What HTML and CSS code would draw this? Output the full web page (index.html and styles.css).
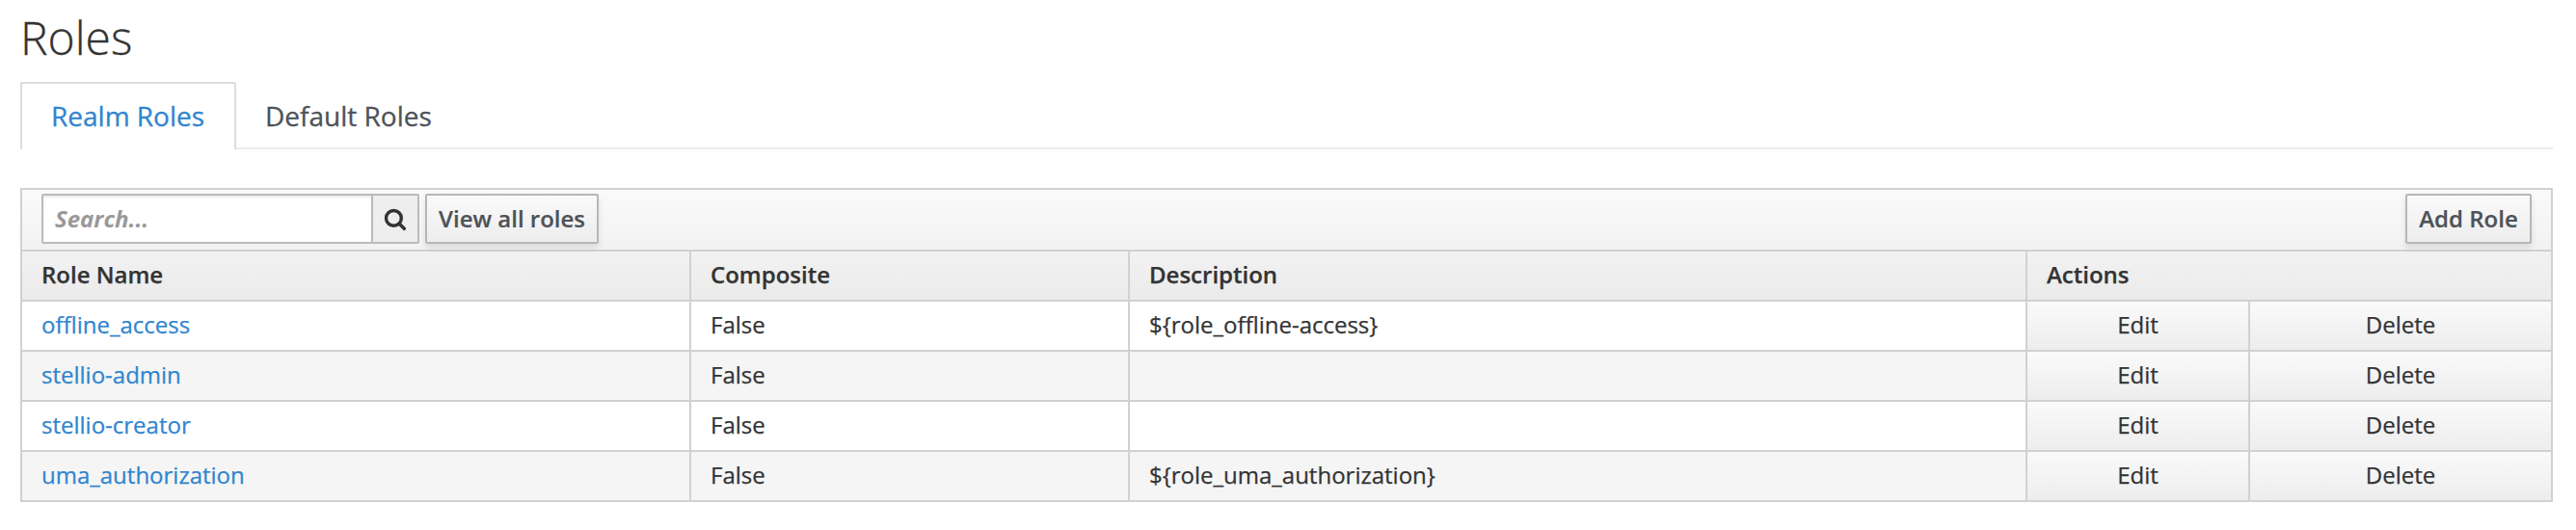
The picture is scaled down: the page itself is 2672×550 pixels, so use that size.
FILE: index.html
```html
<!DOCTYPE html>
<html lang="en">
<head>
<meta charset="utf-8">
<title>Roles</title>
<link rel="stylesheet" href="styles.css">
</head>
<body>
<main class="page">
  <h1 class="title">Roles</h1>
  <ul class="tabs">
    <li class="tab tab-active"><a href="#">Realm Roles</a></li>
    <li class="tab"><a href="#">Default Roles</a></li>
  </ul>
  <div class="panel">
    <div class="toolbar">
      <div class="search">
        <input class="search-input" type="text" placeholder="Search..." aria-label="Search">
        <button class="search-button" type="button" aria-label="Search">
          <svg class="search-icon" viewBox="0 0 24 24"><circle cx="10.4" cy="10.4" r="7.9" fill="none" stroke="#333" stroke-width="3.4"/><path d="M16 16l5.3 5.3" stroke="#333" stroke-width="3.6" stroke-linecap="round"/></svg>
        </button>
      </div>
      <button class="button button-view" type="button">View all roles</button>
      <button class="button button-add" type="button">Add Role</button>
    </div>
    <table class="roles">
      <colgroup><col class="col-name"><col class="col-composite"><col class="col-description"><col class="col-edit"><col class="col-delete"></colgroup>
      <thead>
        <tr><th>Role Name</th><th>Composite</th><th>Description</th><th colspan="2">Actions</th></tr>
      </thead>
      <tbody>
        <tr><td><a href="#">offline_access</a></td><td>False</td><td>${role_offline-access}</td><td class="action">Edit</td><td class="action">Delete</td></tr>
        <tr><td><a href="#">stellio-admin</a></td><td>False</td><td></td><td class="action">Edit</td><td class="action">Delete</td></tr>
        <tr><td><a href="#">stellio-creator</a></td><td>False</td><td></td><td class="action">Edit</td><td class="action">Delete</td></tr>
        <tr><td><a href="#">uma_authorization</a></td><td>False</td><td>${role_uma_authorization}</td><td class="action">Edit</td><td class="action">Delete</td></tr>
      </tbody>
    </table>
  </div>
</main>
</body>
</html>
```

FILE: styles.css
```css
* { box-sizing: border-box; }
body {
  margin: 0;
  background: #fff;
  color: #333;
  font: 24px/40px "Open Sans", "Noto Sans", sans-serif;
}
a { color: #3085ce; text-decoration: none; }
.page { width: 2648px; padding: 12px 0 0 21px; }
.title { margin: 0 0 20px; font-size: 48px; font-weight: 300; line-height: 53px; -webkit-text-stroke: .3px; }
.tabs {
  display: flex;
  height: 70px;
  margin: 0 0 40px;
  padding: 0;
  list-style: none;
  font-size: 28px;
  line-height: 66px;
  border-bottom: 2px solid #ececec;
  -webkit-text-stroke: .3px;
}
.tab { height: 70px; padding: 2px 30px 0; }
.tab a { color: #4d5258; }
.tab-active {
  width: 224px;
  border: 2px solid #ddd;
  border-bottom: 0;
  border-radius: 2px 2px 0 0;
  padding-top: 0;
  background: #fff;
}
.tab-active a { color: #3085ce; }
.panel { border: 2px solid #d1d1d1; }
.toolbar {
  display: flex;
  align-items: flex-start;
  height: 62px;
  padding: 4px 20px 0;
  background: linear-gradient(#fafafa, #f2f2f2);
}
.search {
  display: flex;
  width: 392px;
  height: 52px;
  margin-right: 6px;
  border: 2px solid #bbb;
  border-radius: 2px;
}
.search-input {
  width: 340px;
  padding: 0 12px 1px;
  border: 0;
  background: #fff;
  box-shadow: inset 0 2px 2px rgba(0, 0, 0, .075);
  font: 24px "Open Sans", sans-serif;
  color: #333;
}
.search-input::placeholder { color: #999; font-style: italic; font-weight: 700; opacity: 1; }
.search-button {
  display: flex;
  align-items: center;
  justify-content: center;
  width: 48px;
  padding: 2px 0 0;
  border: 0;
  border-left: 2px solid #bbb;
  background: #eee;
}
.search-icon { width: 24px; height: 24px; }
.button {
  height: 52px;
  padding: 0;
  border: 2px solid #b7b7b7;
  border-radius: 2px;
  background: linear-gradient(#fafafa, #ededed);
  box-shadow: 0 4px 6px rgba(3, 3, 3, .1);
  color: #4d5258;
  font: 600 24px/44px "Open Sans", sans-serif;
  text-align: center;
  white-space: nowrap;
  -webkit-text-stroke: .2px;
}
.button-view { width: 180px; }
.button-add { width: 131px; margin-left: auto; }
.roles { width: 2623px; table-layout: fixed; border-collapse: separate; border-spacing: 0; }
.col-name { width: 692px; }
.col-composite { width: 455px; }
.col-description { width: 931px; }
.col-edit { width: 231px; }
.col-delete { width: 314px; }
.roles th, .roles td {
  height: 52px;
  padding: 0 20px 2px;
  border-top: 2px solid #d1d1d1;
  border-left: 2px solid #d1d1d1;
  text-align: left;
  font-weight: 400;
  line-height: 40px;
  -webkit-text-stroke: .25px;
}
.roles th:first-child, .roles td:first-child { border-left: 0; }
.roles thead tr { background: linear-gradient(#f2f2f2, #ebebeb); }
.roles th { font-weight: 600; }
.roles tbody tr:nth-child(even) { background: #f5f5f5; }
.roles .action { text-align: center; background: linear-gradient(#fafafa, #ededed); }
```
